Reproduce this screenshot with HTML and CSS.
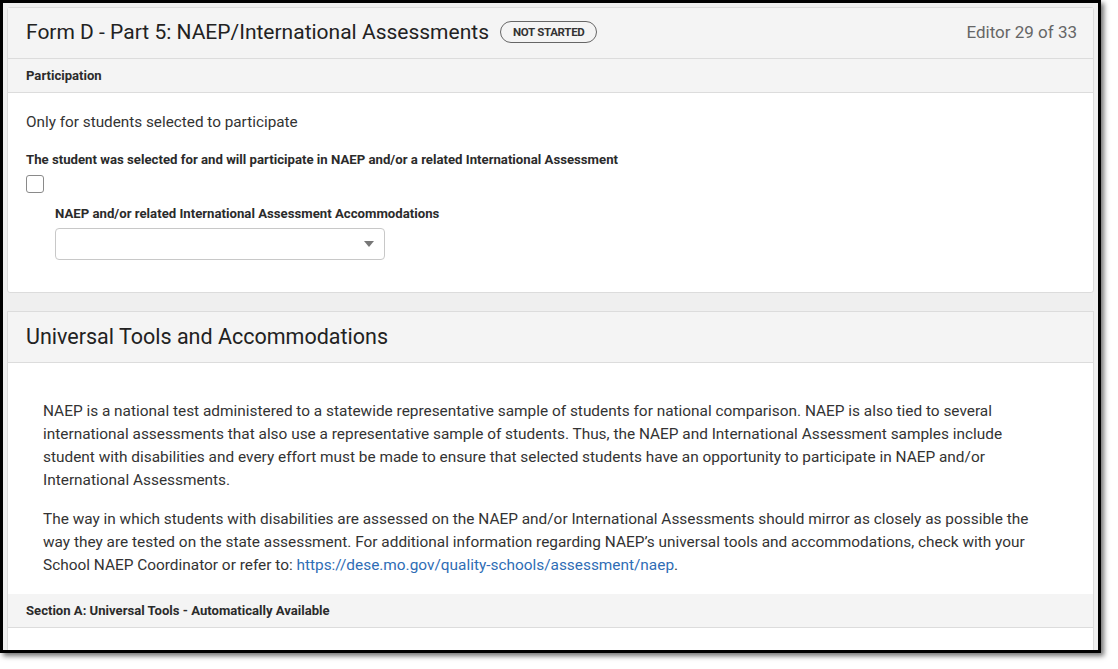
FILE: index.html
```html
<!DOCTYPE html>
<html lang="en">
<head>
<meta charset="utf-8">
<title>Form D - Part 5</title>
<link rel="stylesheet" href="styles.css">
</head>
<body>
<div class="frame">
  <section class="card card-first">
    <header class="card-header header-main">
      <div class="title-group">
        <h1 class="title title-main">Form D - Part 5: NAEP/International Assessments</h1>
        <span class="badge">NOT STARTED</span>
      </div>
      <span class="editor-count">Editor 29 of 33</span>
    </header>
    <div class="band">Participation</div>
    <div class="card-body">
      <p class="intro">Only for students selected to participate</p>
      <div class="field-label">The student was selected for and will participate in NAEP and/or a related International Assessment</div>
      <div class="checkbox"></div>
      <div class="subfield">
        <div class="field-label">NAEP and/or related International Assessment Accommodations</div>
        <div class="select">
          <svg class="caret" width="10" height="6" viewBox="0 0 10 6"><path d="M0 0 L10 0 L5 6 Z" fill="#777"/></svg>
        </div>
      </div>
    </div>
  </section>

  <section class="card card-second">
    <header class="card-header">
      <h2 class="title title-sub">Universal Tools and Accommodations</h2>
    </header>
    <div class="card-body text-body">
      <p class="para">NAEP is a national test administered to a statewide representative sample of students for national comparison. NAEP is also tied to several international assessments that also use a representative sample of students. Thus, the NAEP and International Assessment samples include student with disabilities and every effort must be made to ensure that selected students have an opportunity to participate in NAEP and/or International Assessments.</p>
      <p class="para">The way in which students with disabilities are assessed on the NAEP and/or International Assessments should mirror as closely as possible the way they are tested on the state assessment. For additional information regarding NAEP’s universal tools and accommodations, check with your School NAEP Coordinator or refer to: <a class="link" href="#">https://dese.mo.gov/quality-schools/assessment/naep</a>.</p>
    </div>
    <div class="band">Section A: Universal Tools - Automatically Available</div>
    <div class="card-body tail"></div>
  </section>
</div>
</body>
</html>
```

FILE: styles.css
```css
* { box-sizing: border-box; }

html, body {
  margin: 0;
  padding: 0;
  background: #ffffff;
}

body {
  font-family: Roboto, "Liberation Sans", Arial, sans-serif;
  color: #2b2b2b;
  width: 1118px;
  height: 669px;
  overflow: hidden;
}

.frame {
  width: 1101px;
  height: 653px;
  border: 3px solid #000;
  background: #efefef;
  padding: 4px 4px 0 4px;
  box-shadow: 3px 3px 5px rgba(0, 0, 0, 0.55);
  overflow: hidden;
}

.card {
  background: #fff;
  border: 1px solid #dcdcdc;
}

.card-first {
  border-radius: 3px;
}

.card-second {
  margin-top: 18px;
  border-bottom: none;
}

.card-header {
  height: 51px;
  background: #f4f4f4;
  border-bottom: 1px solid #dcdcdc;
  display: flex;
  align-items: center;
  justify-content: space-between;
  padding: 0 16px 0 18px;
}

.header-main {
  padding-bottom: 3px;
}

.title-group {
  display: flex;
  align-items: center;
  gap: 11px;
}

.title {
  margin: 0;
  font-weight: 400;
  color: #222;
  line-height: 26px;
}

.title-main {
  font-size: 21px;
}

.title-sub {
  font-size: 21.5px;
}

.badge {
  display: inline-flex;
  align-items: center;
  height: 22px;
  padding: 0 12px;
  border: 1px solid #666;
  border-radius: 11px;
  font-size: 11.5px;
  font-weight: 700;
  letter-spacing: -0.3px;
  color: #333;
  margin-top: 1px;
}

.editor-count {
  font-size: 17px;
  color: #666;
}

.band {
  height: 34px;
  background: #f4f4f4;
  border-bottom: 1px solid #dcdcdc;
  display: flex;
  align-items: center;
  padding-left: 18px;
  font-size: 13.1px;
  font-weight: 700;
  color: #2b2b2b;
}

.card-body {
  padding: 19px 18px 32px 18px;
}

.intro {
  margin: 0;
  font-size: 15.3px;
  line-height: 20px;
  color: #333;
}

.field-label {
  font-size: 13.2px;
  font-weight: 700;
  line-height: 16px;
  color: #2b2b2b;
}

.card-body > .field-label {
  margin-top: 20px;
}

.checkbox {
  width: 18px;
  height: 18px;
  margin-top: 7px;
  border: 1px solid #8a8a8a;
  border-radius: 3px;
  background: #fff;
}

.subfield {
  margin-left: 29px;
  margin-top: 13px;
}

.select {
  margin-top: 6px;
  width: 330px;
  height: 32px;
  border: 1px solid #c8c8c8;
  border-radius: 4px;
  background: #fff;
  display: flex;
  align-items: center;
  justify-content: flex-end;
  padding-right: 10px;
}

.caret {
  display: block;
}

.text-body {
  padding: 37px 40px 17px 35px;
}

.para {
  margin: 0;
  font-size: 15.4px;
  line-height: 23px;
  color: #333;
}

.para + .para {
  margin-top: 16px;
}

.link {
  color: #2f6db5;
  text-decoration: none;
}

.tail {
  height: 40px;
  padding: 0;
}
```
